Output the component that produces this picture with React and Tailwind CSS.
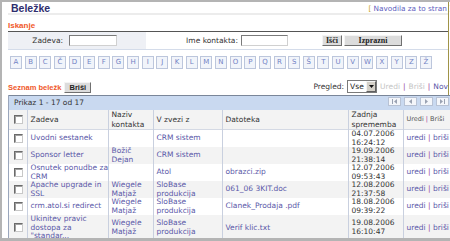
import React from "react";

const letters = "A B C Č D E F G H I J K L M N O P Q R S Š T U V W X Y Z Ž".split(" ");

const rows = [
  { z: ["Uvodni sestanek"], n: [], v: ["CRM sistem"], d: "", t: ["04.07.2006", "16:24:12"] },
  { z: ["Sponsor letter"], n: ["Božič", "Dejan"], v: ["CRM sistem"], d: "", t: ["19.09.2006", "21:38:14"] },
  { z: ["Osnutek ponudbe za", "CRM"], n: [], v: ["Atol"], d: "obrazci.zip", t: ["12.07.2006", "09:53:43"] },
  { z: ["Apache upgrade in", "SSL"], n: ["Wiegele", "Matjaž"], v: ["SloBase", "produkcija"], d: "061_06 3KIT.doc", t: ["12.08.2006", "21:37:58"] },
  { z: ["crm.atol.si redirect"], n: ["Wiegele", "Matjaž"], v: ["SloBase", "produkcija"], d: "Clanek_Prodaja .pdf", t: ["18.08.2006", "09:39:22"] },
  { z: ["Ukinitev pravic", "dostopa za", "\"standar..."], n: ["Wiegele", "Matjaž"], v: ["SloBase", "produkcija"], d: "Verif klic.txt", t: ["19.08.2006", "16:10:47"] },
];

function Lines({ items, className = "" }) {
  return (
    <>
      {items.map((s, i) => (
        <div key={i} className={"whitespace-nowrap " + className}>{s}</div>
      ))}
    </>
  );
}

function Check() {
  return (
    <div className="w-[9px] h-[9px] bg-white border border-t-[#6b6b6b] border-l-[#6b6b6b] border-r-[#c8c8c8] border-b-[#c8c8c8] shadow-[inset_1px_1px_0_#a0a0a0]" />
  );
}

function PagerBtn({ kind }) {
  return (
    <div className="w-[13px] h-[9px] bg-[#f4f6fa] border border-[#b8c2d4] flex items-center justify-center">
      <svg width="7" height="5" viewBox="0 0 7 5">
        {kind === "first" && (<><rect x="1" y="0" width="1" height="5" fill="#9aa2b2" /><path d="M6 0 L3 2.5 L6 5 Z" fill="#9aa2b2" /></>)}
        {kind === "prev" && <path d="M5 0 L2 2.5 L5 5 Z" fill="#9aa2b2" />}
        {kind === "next" && <path d="M2 0 L5 2.5 L2 5 Z" fill="#9aa2b2" />}
        {kind === "last" && (<><path d="M1 0 L4 2.5 L1 5 Z" fill="#9aa2b2" /><rect x="5" y="0" width="1" height="5" fill="#9aa2b2" /></>)}
      </svg>
    </div>
  );
}

export default function App() {
  const cell = "border-l border-[#c9d0df] px-[3px] align-middle";
  return (
    <div className="w-[450px] h-[241px] overflow-hidden bg-white border-t-2 border-l-2 border-b-[3px] border-[#b4b4b4] flex flex-col font-['DejaVu_Sans',sans-serif] text-[7.5px] text-[#333]">
      {/* top block */}
      <div className="w-[447px] border-r border-[#a09448] pl-[6px] shrink-0">
        <div className="h-[13px] flex items-center justify-between border-b-2 border-[#ececec]">
          <div className="pl-[3px] font-['Liberation_Sans',sans-serif] font-bold text-[10.5px] leading-[12px] text-[#2e2e6e]">Beležke</div>
          <div className="pt-[3px] whitespace-nowrap leading-[10px] text-[7.3px] -mr-[4px]">
            <span className="text-[#c8a020]">[</span>{" "}
            <span className="text-[#6060c0]">Navodila za to stran</span>{" "}
            <span className="text-[#c8a020]">]</span>
          </div>
        </div>
        <div className="mt-[6px] leading-[10px] font-['Liberation_Sans',sans-serif] font-bold text-[8px] text-[#f0582a] border-b border-[#555]">Iskanje</div>
        <div className="h-[18px] flex items-center border-b border-[#d4dcea]">
          <div className="w-[138px] h-full bg-[#eef0f5] flex items-center">
            <div className="w-[58px] text-right pr-[3px] text-[7.5px] text-[#333]">Zadeva:</div>
            <div className="ml-[3px] w-[48px] h-[11px] bg-white border border-t-[#7a7a7a] border-l-[#7a7a7a] border-r-[#d0d0d0] border-b-[#d0d0d0]" />
          </div>
          <div className="w-[95px] text-right pr-[3px] text-[7.5px] text-[#333] whitespace-nowrap">Ime kontakta:</div>
          <div className="w-[47px] h-[11px] bg-white border border-t-[#7a7a7a] border-l-[#7a7a7a] border-r-[#d0d0d0] border-b-[#d0d0d0]" />
          <div className="ml-[34px] w-[20px] h-[11px] bg-[#dcdcdc] border border-t-[#f4f4f4] border-l-[#f4f4f4] border-r-[#707070] border-b-[#707070] flex items-center justify-center font-['Liberation_Serif',serif] font-bold text-[8px] leading-none text-[#222]">Išči</div>
          <div className="ml-[2px] w-[58px] h-[11px] bg-[#dcdcdc] border border-t-[#f4f4f4] border-l-[#f4f4f4] border-r-[#707070] border-b-[#707070] flex items-center justify-center font-['Liberation_Serif',serif] font-bold text-[8px] leading-none text-[#222]">Izprazni</div>
        </div>
        <div className="mt-[6px] h-[13px] pl-[2px] flex gap-[2.65px]">
          {letters.map((l) => (
            <div key={l} className="w-[12px] h-[13px] shrink-0 bg-[#f1f4fa] border border-[#bcc6dc] flex items-center justify-center text-[7px] leading-none text-[#7282c4]">{l}</div>
          ))}
        </div>
        <div className="h-[26px] flex items-end pb-[2px]">
          <div className="font-['Liberation_Sans',sans-serif] font-bold text-[7.5px] leading-[10px] text-[#f0582a] whitespace-nowrap">Seznam beležk</div>
          <div className="ml-[3px] w-[27px] h-[11px] bg-[#dcdcdc] border border-t-[#f4f4f4] border-l-[#f4f4f4] border-r-[#707070] border-b-[#707070] flex items-center justify-center font-['Liberation_Sans',sans-serif] font-bold text-[7.5px] leading-none text-[#222]">Briši</div>
          <div className="ml-auto flex items-end whitespace-nowrap">
            <span className="leading-[10px] text-[#333] mb-[1px]">Pregled:</span>
            <div className="ml-[3px] w-[30px] h-[13px] bg-white border border-[#7a7a7a] flex items-center">
              <span className="pl-[2px] text-[7.5px] text-[#222] flex-1 leading-none">Vse</span>
              <div className="w-[10px] h-[11px] bg-[#d4d0c8] border border-t-[#f4f4f4] border-l-[#f4f4f4] border-r-[#606060] border-b-[#606060] flex items-center justify-center">
                <svg width="5" height="3" viewBox="0 0 5 3"><path d="M0 0 L5 0 L2.5 3 Z" fill="#111" /></svg>
              </div>
            </div>
            <span className="ml-[3px] leading-[10px] mb-[1px] text-[#c4c4c4]">Uredi</span>
            <span className="mx-[3px] leading-[10px] mb-[1px] text-[#993399]">|</span>
            <span className="leading-[10px] mb-[1px] text-[#c4c4c4]">Briši</span>
            <span className="mx-[3px] leading-[10px] mb-[1px] text-[#993399]">|</span>
            <span className="leading-[10px] mb-[1px] text-[#5a58a8]">Nov</span>
          </div>
        </div>
      </div>

      {/* table block */}
      <div className="ml-[6px] w-[442px] border-l border-[#9aa6bc] shrink-0">
        <div className="h-[15px] bg-[#c9d9f0] border-t border-[#7a8699] flex items-center pl-[5px] pr-[1px]">
          <span className="text-[7.5px] text-[#333]">Prikaz 1 - 17 od 17</span>
          <div className="ml-auto flex gap-[3px] -mt-[3px]">
            <PagerBtn kind="first" />
            <PagerBtn kind="prev" />
            <PagerBtn kind="next" />
            <PagerBtn kind="last" />
          </div>
        </div>
        <table className="table-fixed border-collapse w-[442px]">
          <colgroup>
            <col className="w-[18px]" />
            <col className="w-[81px]" />
            <col className="w-[45px]" />
            <col className="w-[69px]" />
            <col className="w-[126px]" />
            <col className="w-[55px]" />
            <col className="w-[48px]" />
          </colgroup>
          <thead>
            <tr className="bg-[#f3f3f3] leading-[9.5px] h-[19px] border-b border-[#d4d9e4] text-left">
              <th className="font-normal px-[5px] align-middle"><Check /></th>
              <th className={cell + " font-normal"}>Zadeva</th>
              <th className={cell + " font-normal"}><div>Naziv</div><div>kontakta</div></th>
              <th className={cell + " font-normal"}>V zvezi z</th>
              <th className={cell + " font-normal"}>Datoteka</th>
              <th className={cell + " font-normal"}><div>Zadnja</div><div>sprememba</div></th>
              <th className={cell + " font-normal text-[6.5px] whitespace-nowrap"}>
                <span className="text-[#555]">Uredi</span> <span className="text-[#993399]">|</span> <span className="text-[#555]">Briši</span>
              </th>
            </tr>
          </thead>
          <tbody>
            {rows.map((r, i) => (
              <tr key={i} className={(i % 2 === 1 ? "bg-[#f3f3f3]" : "bg-white") + " leading-[8.5px] h-[17px]"}>
                <td className="px-[5px] align-middle"><Check /></td>
                <td className={cell + " text-[#5a58a8]"}><Lines items={r.z} /></td>
                <td className={cell + " text-[#5a58a8]"}><Lines items={r.n} /></td>
                <td className={cell + " text-[#5a58a8]"}><Lines items={r.v} /></td>
                <td className={cell + " text-[#5a58a8] whitespace-nowrap"}>{r.d}</td>
                <td className={cell + " text-[#333]"}><Lines items={r.t} /></td>
                <td className={cell + " whitespace-nowrap"}>
                  <span className="text-[#5a58a8]">uredi</span> <span className="text-[#993399]">|</span> <span className="text-[#5a58a8]">briši</span>
                </td>
              </tr>
            ))}
          </tbody>
        </table>
      </div>
    </div>
  );
}
